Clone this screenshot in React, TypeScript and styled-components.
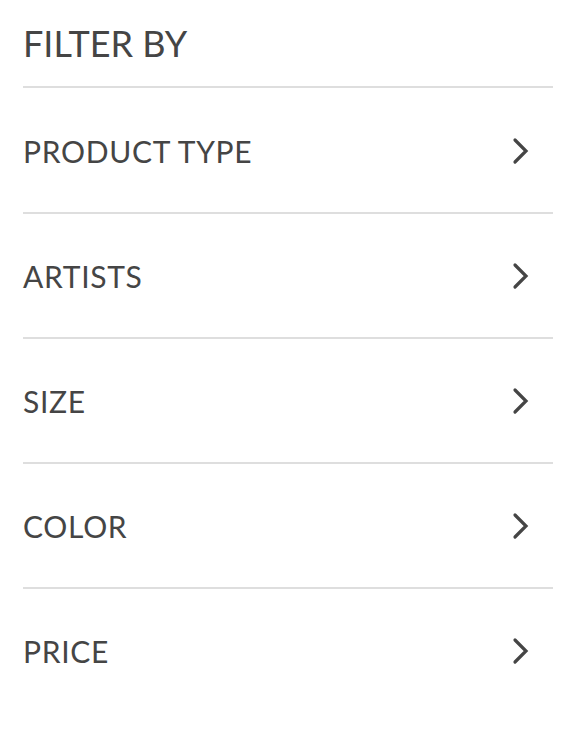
import React from "react";
import styled, { createGlobalStyle } from "styled-components";

const GlobalStyle = createGlobalStyle`
  html, body {
    margin: 0;
    padding: 0;
    background: #ffffff;
  }
  body {
    font-family: Lato, "Open Sans", sans-serif;
    color: #454545;
  }
`;

const Panel = styled.aside`
  width: 530px;
  padding: 0 20px 0 23px;
  display: flex;
  flex-direction: column;
`;

const Title = styled.h2`
  margin: 0;
  padding: 22px 0 21px;
  font-size: 36px;
  line-height: 43px;
  font-weight: 400;
  letter-spacing: 0;
  color: #454545;
  border-bottom: 2px solid #dedede;
`;

const List = styled.ul`
  list-style: none;
  margin: 1px 0 0;
  padding: 0;
`;

const Row = styled.li<{ $last?: boolean }>`
  display: flex;
  align-items: center;
  justify-content: space-between;
  height: 123px;
  border-bottom: ${(p) => (p.$last ? "2px solid transparent" : "2px solid #dedede")};
  cursor: pointer;
`;

const Label = styled.span`
  font-size: 30px;
  line-height: 36px;
  font-weight: 400;
  letter-spacing: 0.7px;
  color: #454545;
`;

const Chevron = styled.svg`
  width: 18px;
  height: 28px;
  margin-right: 23px;
  flex-shrink: 0;
`;

const items = ["PRODUCT TYPE", "ARTISTS", "SIZE", "COLOR", "PRICE"];

export default function App() {
  return (
    <>
      <GlobalStyle />
      <Panel>
        <Title>FILTER BY</Title>
        <List>
          {items.map((item, i) => (
            <Row key={item} $last={i === items.length - 1}>
              <Label>{item}</Label>
              <Chevron viewBox="0 0 18 28" fill="none">
                <path
                  d="M3 3 L14 14 L3 25"
                  stroke="#454545"
                  strokeWidth="3.2"
                  strokeLinecap="round"
                  strokeLinejoin="miter"
                />
              </Chevron>
            </Row>
          ))}
        </List>
      </Panel>
    </>
  );
}
